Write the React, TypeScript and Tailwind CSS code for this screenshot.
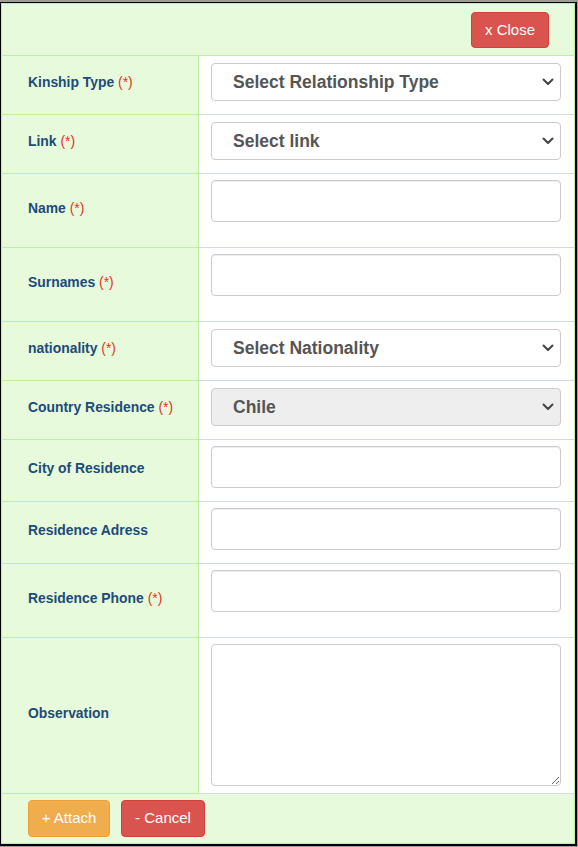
import React from 'react';

const font = { fontFamily: '"Liberation Sans", Arial, sans-serif' };

function Chevron() {
  return (
    <svg className="pointer-events-none absolute right-[7px] top-1/2 -translate-y-1/2" width="12" height="8" viewBox="0 0 12 8" fill="none">
      <path d="M1.5 1.5 L6 6 L10.5 1.5" stroke="#444" strokeWidth="2" strokeLinecap="round" strokeLinejoin="round" />
    </svg>
  );
}

function SelectBox({ text, disabled = false }: { text: string; disabled?: boolean }) {
  return (
    <div className="relative w-[350px]">
      <select
        disabled={disabled}
        className={`h-[38px] w-full appearance-none rounded-[4px] border border-[#cccccc] pl-[21px] text-[17.5px] font-bold text-[#555555] outline-none ${disabled ? 'bg-[#eeeeee]' : 'bg-white'}`}
        style={font}
      >
        <option>{text}</option>
      </select>
      <Chevron />
    </div>
  );
}

function TextBox() {
  return <input type="text" className="h-[42px] w-[350px] rounded-[4px] border border-[#cccccc] bg-white shadow-[inset_0_1px_1px_rgba(0,0,0,0.075)] outline-none" />;
}

interface RowProps {
  label: string;
  required?: boolean;
  height: string;
  children: React.ReactNode;
}

function Row({ label, required, height, children }: RowProps) {
  return (
    <div className={`flex ${height}`}>
      <div className="flex w-[197px] shrink-0 items-center border-b border-r border-[#bdf09c] pb-[5px] pl-[26px] text-[13.9px] font-bold text-[#1d4b7a]">
        <span>
          {label}
          {required && <span className="font-normal text-[#e2361c]"> (*)</span>}
        </span>
      </div>
      <div className="flex-1 border-b border-[#d3dbe2] bg-white pl-[12px] pt-[6px]">{children}</div>
    </div>
  );
}

export default function App() {
  return (
    <div className="h-[847px] w-[578px] bg-[#9c9c9c] pt-[2px] pr-px" style={font}>
      <div className="h-[844px] w-[577px] border-b-2 border-l border-r-2 border-t border-black">
        <div className="flex h-full flex-col border border-[#bdf09c] bg-[#e7fadb]">
          <div className="flex h-[52px] items-start justify-end border-b border-[#bdf09c] pr-[25px] pt-[8px]">
            <button className="h-[36px] w-[78px] rounded-[4px] border border-[#d43f3a] bg-[#d9534f] text-[15px] text-white">x Close</button>
          </div>

          <Row label="Kinship Type" required height="h-[59px]">
            <div className="pt-px"><SelectBox text="Select Relationship Type" /></div>
          </Row>
          <Row label="Link" required height="h-[59px]">
            <div className="pt-px"><SelectBox text="Select link" /></div>
          </Row>
          <Row label="Name" required height="h-[74px]">
            <TextBox />
          </Row>
          <Row label="Surnames" required height="h-[74px]">
            <TextBox />
          </Row>
          <Row label="nationality" required height="h-[59px]">
            <div className="pt-px"><SelectBox text="Select Nationality" /></div>
          </Row>
          <Row label="Country Residence" required height="h-[59px]">
            <div className="pt-px"><SelectBox text="Chile" disabled /></div>
          </Row>
          <Row label="City of Residence" height="h-[62px]">
            <TextBox />
          </Row>
          <Row label="Residence Adress" height="h-[62px]">
            <TextBox />
          </Row>
          <Row label="Residence Phone" required height="h-[74px]">
            <TextBox />
          </Row>
          <Row label="Observation" height="h-[156px]">
            <textarea className="block h-[142px] w-[350px] rounded-[4px] border border-[#cccccc] bg-white outline-none" />
          </Row>

          <div className="flex flex-1 items-start gap-[11px] pl-[26px] pt-[6px]">
            <button className="h-[37px] w-[82px] rounded-[4px] border border-[#eea236] bg-[#f0ad4e] text-[15px] text-white">+ Attach</button>
            <button className="h-[37px] w-[84px] rounded-[4px] border border-[#d43f3a] bg-[#d9534f] text-[15px] text-white">- Cancel</button>
          </div>
        </div>
      </div>
    </div>
  );
}
